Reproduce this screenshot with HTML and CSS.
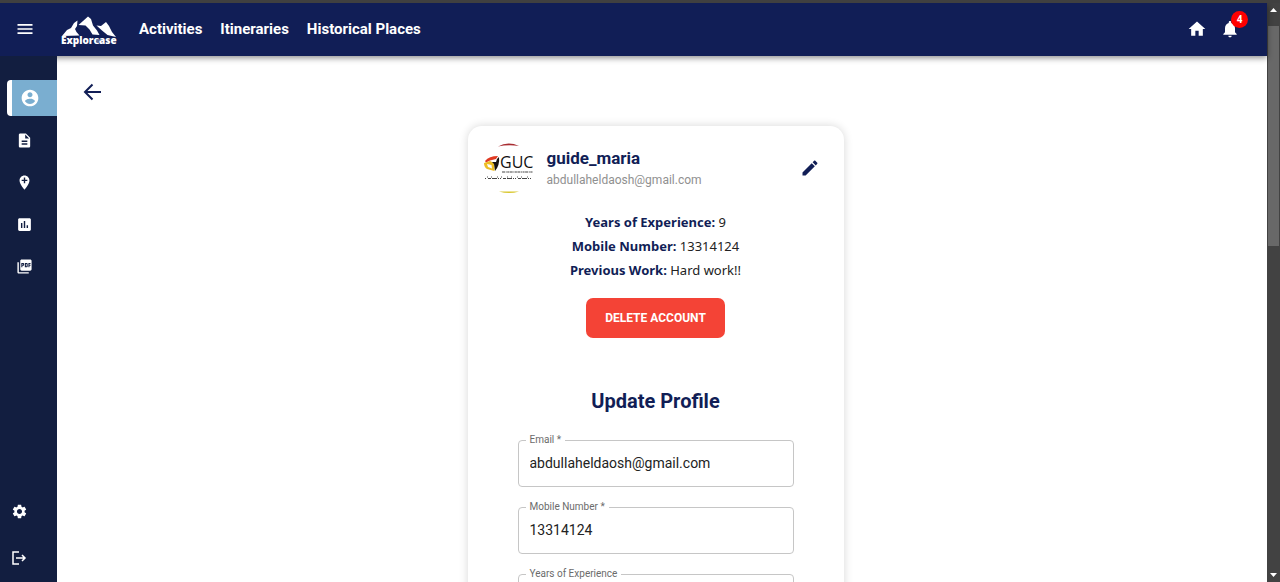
FILE: index.html
```html
<!DOCTYPE html>
<html lang="en">
<head>
<meta charset="utf-8">
<title>Explorease - Profile</title>
<link rel="stylesheet" href="styles.css">
</head>
<body>
<div class="app">
  <header class="topbar">
    <button class="icon-btn menu-btn" aria-label="Menu"><svg viewBox="0 0 24 24" width="20" height="20"><path d="M3 18h18v-2H3v2zm0-5h18v-2H3v2zm0-7v2h18V6H3z"/></svg></button>
    <a class="logo" href="#" aria-label="Explorease home">
      <svg viewBox="0 0 58 34" width="58" height="34">
        <path d="M2 22 7 16l4-2 3-5 3.500-2.500L17 12l-2 3 1.500 3 3 3.500z"/>
        <path d="M18.500 11 23 7l5-4.500L31 5l2 6.500 4 5 2.500 4.500-7-.5-3-5-4-4z"/>
        <path d="M36.500 11.500l4.500.5 5-4 3 4 3 6 4 5-8.500-2-5.500-4.500z"/>
        <text class="logo-text" x="1" y="30">Explore</text>
        <circle class="logo-dot" cx="38" cy="27" r="2"/>
        <text class="logo-text" x="39" y="30">ase</text>
      </svg>
    </a>
    <nav class="links">
      <a href="#">Activities</a>
      <a href="#">Itineraries</a>
      <a href="#">Historical Places</a>
    </nav>
    <div class="actions">
      <button class="icon-btn" aria-label="Home"><svg viewBox="0 0 24 24" width="20" height="20"><path d="M10 20v-6h4v6h5v-8h3L12 3 2 12h3v8z"/></svg></button>
      <button class="icon-btn" aria-label="Notifications"><svg viewBox="0 0 24 24" width="20" height="20"><path d="M12 22c1.100 0 2-.9 2-2h-4c0 1.100.890 2 2 2zm6-6v-5c0-3.070-1.640-5.640-4.500-6.320V4c0-.83-.67-1.500-1.500-1.500s-1.500.67-1.500 1.500v.68C7.630 5.360 6 7.920 6 11v5l-2 2v1h16v-1l-2-2z"/></svg><span class="badge">4</span></button>
    </div>
  </header>
  <div class="body">
    <aside class="sidebar">
      <nav class="side-nav" aria-label="Sections">
        <a class="side-link active" href="#" aria-label="Profile"><svg viewBox="0 0 24 24" width="20" height="20"><path d="M12 2C6.480 2 2 6.480 2 12s4.480 10 10 10 10-4.480 10-10S17.520 2 12 2zm0 3c1.660 0 3 1.340 3 3s-1.340 3-3 3-3-1.340-3-3 1.340-3 3-3zm0 14.200c-2.500 0-4.710-1.280-6-3.220.03-1.990 4-3.080 6-3.080 1.990 0 5.970 1.090 6 3.080-1.290 1.940-3.500 3.220-6 3.220z"/></svg></a>
        <a class="side-link" href="#" aria-label="Itineraries"><svg viewBox="0 0 24 24" width="17" height="17"><path d="M14 2H6c-1.100 0-1.990.9-1.990 2L4 20c0 1.100.890 2 1.990 2H18c1.100 0 2-.9 2-2V8l-6-6zm2 16H8v-2h8v2zm0-4H8v-2h8v2zm-3-5V3.500L18.500 9H13z"/></svg></a>
        <a class="side-link" href="#" aria-label="Add place"><svg viewBox="0 0 24 24" width="17" height="17"><path d="M12 2C8.140 2 5 5.140 5 9c0 5.250 7 13 7 13s7-7.750 7-13c0-3.860-3.140-7-7-7zm4 8h-3v3h-2v-3H8V8h3V5h2v3h3v2z"/></svg></a>
        <a class="side-link" href="#" aria-label="Statistics"><svg viewBox="0 0 24 24" width="17" height="17"><path d="M19 3H5c-1.100 0-2 .9-2 2v14c0 1.100.9 2 2 2h14c1.100 0 2-.9 2-2V5c0-1.100-.9-2-2-2zM9 17H7v-7h2v7zm4 0h-2V7h2v10zm4 0h-2v-4h2v4z"/></svg></a>
        <a class="side-link" href="#" aria-label="PDF reports"><svg viewBox="0 0 24 24" width="17" height="17"><path d="M20 2H8c-1.100 0-2 .9-2 2v12c0 1.100.9 2 2 2h12c1.100 0 2-.9 2-2V4c0-1.100-.9-2-2-2zm-8.500 7.500c0 .83-.67 1.500-1.500 1.500H9v2H7.500V7H10c.83 0 1.500.67 1.500 1.500v1zm5 2c0 .83-.67 1.500-1.500 1.500h-2.500V7H15c.83 0 1.500.67 1.500 1.500v3zm4-3H19v1h1.500V11H19v2h-1.500V7h3v1.500zM9 9.500h1v-1H9v1zM4 6H2v14c0 1.100.9 2 2 2h14v-2H4V6zm10 5.500h1v-3h-1v3z"/></svg></a>
      </nav>
      <div class="side-foot">
        <a class="foot-link" href="#" aria-label="Settings"><svg viewBox="0 0 24 24" width="17" height="17"><path d="M19.140 12.940c.04-.3.060-.61.060-.94 0-.32-.02-.64-.07-.94l2.030-1.580c.18-.14.230-.41.120-.61l-1.920-3.320c-.12-.22-.37-.29-.59-.22l-2.390.96c-.5-.38-1.030-.7-1.620-.94l-.36-2.540c-.04-.24-.24-.41-.48-.41h-3.840c-.24 0-.43.170-.47.410l-.36 2.540c-.59.240-1.130.570-1.620.940l-2.390-.96c-.22-.08-.47 0-.59.220L2.740 8.870c-.12.210-.08.470.12.610l2.030 1.580c-.05.300-.09.630-.09.940s.02.640.070.940l-2.030 1.580c-.18.140-.23.410-.12.610l1.920 3.320c.12.220.37.290.59.220l2.390-.96c.5.380 1.030.7 1.620.94l.36 2.540c.05.240.24.410.48.410h3.840c.24 0 .44-.17.470-.41l.36-2.540c.59-.24 1.130-.56 1.620-.94l2.390.96c.22.080.47 0 .59-.22l1.920-3.320c.12-.22.070-.47-.12-.61l-2.010-1.580zM12 15.600c-1.980 0-3.600-1.620-3.600-3.600s1.620-3.600 3.600-3.600 3.600 1.620 3.600 3.600-1.620 3.600-3.600 3.600z"/></svg></a>
        <a class="foot-link" href="#" aria-label="Log out"><svg class="stroke" viewBox="0 0 16 16" width="16" height="16"><path d="M8 2H2v12h6M5 8h9M11 5l3 3-3 3"/></svg></a>
      </div>
    </aside>
    <main class="content">
      <button class="icon-btn back" aria-label="Back"><svg class="stroke" viewBox="0 0 20 20" width="20" height="20"><path d="M19 10H3M10.500 2.500 3 10l7.500 7.500"/></svg></button>
      <section class="card">
        <div class="profile">
          <svg class="avatar" viewBox="0 0 50 50" width="50" height="50" role="img" aria-label="GUC logo">
            <path fill="#a82d32" d="M14 3.500Q24-2 35 3 24 1.500 14 3.500z"/>
            <path fill="#d9c72e" d="M15 48.500h20Q25 51.500 15 48.500z"/>
            <path fill="#e03a22" d="M1 18Q5 13 14 13l-2 3-6 1.500-4 2z"/>
            <path fill="#edbd23" d="M0 20l6-2 4 2 .5 8L3 26Q0 24 0 20zM3 21l1 3 4 1.500L7.500 22z"/>
            <path fill="#171310" d="M13 16l2-2q1 8-4 14l-1-7-2-2 4 0z"/>
            <text class="guc" x="16" y="25">GUC</text>
            <path fill="none" stroke="#444" stroke-width="1.200" stroke-dasharray="3 .7 1 .5 2 .5" d="M18 29h31"/>
            <path fill="none" stroke="#444" stroke-width="1.200" stroke-dasharray="1 2 3 1 5 1 1 1" d="M1 35.500h48"/>
            <path fill="none" stroke="#555" stroke-width="1" stroke-dasharray="1 3 1 5" d="M3 34h44"/>
          </svg>
          <div class="who">
            <h1>guide_maria</h1>
            <p>abdullaheldaosh@gmail.com</p>
          </div>
          <button class="icon-btn edit" aria-label="Edit profile"><svg viewBox="0 0 24 24" width="20" height="20"><path d="M3 17.250V21h3.750L17.810 9.940l-3.750-3.750L3 17.250zM20.710 7.040c.39-.39.390-1.020 0-1.410l-2.340-2.340c-.39-.39-1.020-.39-1.410 0l-1.830 1.830 3.750 3.750 1.830-1.830z"/></svg></button>
        </div>
        <div class="details">
          <p><strong>Years of Experience:</strong> 9</p>
          <p><strong>Mobile Number:</strong> 13314124</p>
          <p><strong>Previous Work:</strong> Hard work!!</p>
        </div>
        <button class="delete">DELETE ACCOUNT</button>
        <form class="form">
          <h2>Update Profile</h2>
          <fieldset class="field">
            <legend><label for="email">Email *</label></legend>
            <input id="email" type="text" value="abdullaheldaosh@gmail.com">
          </fieldset>
          <fieldset class="field">
            <legend><label for="mobile">Mobile Number *</label></legend>
            <input id="mobile" type="text" value="13314124">
          </fieldset>
          <fieldset class="field">
            <legend><label for="years">Years of Experience</label></legend>
            <input id="years" type="text" value="9">
          </fieldset>
        </form>
      </section>
    </main>
  </div>
</div>
<div class="scrollbar" aria-hidden="true">
  <svg viewBox="0 0 13 23" width="13" height="23"><path d="M3 9 6.500 5 10 9z"/></svg>
  <div class="thumb"></div>
  <svg class="down" viewBox="0 0 13 14" width="13" height="14"><path d="M3 5h7L6.500 9z"/></svg>
</div>
</body>
</html>
```
FILE: styles.css
```css
* { box-sizing: border-box; }
body {
  margin: 0;
  height: 100vh;
  display: flex;
  overflow: hidden;
  border-top: 3px solid #404040;
  background: #fff;
  font-family: Roboto, "Liberation Sans", sans-serif;
  color: #222;
}
h1, h2, p { margin: 0; }
svg { display: block; fill: currentColor; flex: none; }
.stroke { fill: none; stroke: currentColor; stroke-width: 2; }
.side-foot .stroke { stroke-width: 1.5; }
.icon-btn {
  position: relative;
  padding: 0;
  border: 0;
  background: none;
  color: inherit;
}
.app { flex: 1; min-width: 0; display: flex; flex-direction: column; }
.topbar {
  position: relative;
  flex: none;
  height: 53px;
  padding: 0 27px 1px 15px;
  display: flex;
  align-items: center;
  background: #111e56;
  color: #fff;
  box-shadow: 0 2px 6px rgba(0, 0, 0, .45);
}
.logo { margin-left: 25px; padding-top: 4px; color: #fff; }
.logo-text { font: 800 10px "Open Sans", sans-serif; }
.logo-dot { fill: #65709d; }
.links { display: flex; gap: 18px; margin-left: 21px; }
.links a { color: #fff; font-size: 15px; font-weight: 700; line-height: 20px; text-decoration: none; }
.actions { margin-left: auto; display: flex; gap: 13px; }
.badge {
  position: absolute;
  top: -8px;
  right: -8px;
  width: 17px;
  height: 17px;
  border-radius: 50%;
  background: #f00;
  font: 700 10px/17px Roboto, sans-serif;
  text-align: center;
}
.body { flex: 1; min-height: 0; display: flex; }
.sidebar {
  position: relative;
  flex: none;
  width: 57px;
  padding: 24px 0 16px;
  display: flex;
  flex-direction: column;
  justify-content: space-between;
  background: #121e40;
  color: #fff;
}
.side-nav { display: flex; flex-direction: column; gap: 6px; }
.side-link { height: 36px; padding-left: 16px; display: flex; align-items: center; color: #fff; }
.side-link.active {
  margin-left: 7px;
  padding-left: 8px;
  border-left: 5px solid #fff;
  border-radius: 4px 0 0 4px;
  background: #7aaed0;
}
.side-foot { display: flex; flex-direction: column; gap: 30px; padding-left: 11px; }
.foot-link { color: #fff; }
.content {
  flex: 1;
  min-width: 0;
  padding: 26px 38px 0 25px;
  display: flex;
  flex-direction: column;
  align-items: flex-start;
  color: #111e56;
}
.card {
  align-self: center;
  flex: none;
  width: 376px;
  margin-top: 24px;
  padding: 17px 16px 24px;
  display: flex;
  flex-direction: column;
  align-items: center;
  border-radius: 14px;
  background: #fff;
  box-shadow: 0 0 10px rgba(0, 0, 0, .16);
}
.profile { align-self: stretch; display: flex; align-items: center; gap: 13px; }
.guc { font: 16px "Open Sans", sans-serif; fill: #111; }
.who { padding-top: 2px; }
h1 { font-size: 17px; line-height: 22px; font-weight: 700; }
.who p { font-size: 12px; line-height: 22px; color: #909090; }
.edit { margin-left: auto; margin-right: 8px; }
.details {
  margin-top: 17px;
  font: 13px/24px "Noto Sans", "Open Sans", sans-serif;
  text-align: center;
  color: #222;
}
.details strong { color: #111e56; }
.delete {
  height: 40px;
  margin-top: 16px;
  padding: 0 19px;
  border: 0;
  border-radius: 7px;
  background: #f44336;
  color: #fff;
  font: 700 12px Roboto, sans-serif;
}
.form { align-self: stretch; padding: 0 34px; margin-top: 48px; }
h2 { font-size: 20px; line-height: 30px; font-weight: 700; text-align: center; margin-bottom: 18px; }
.field {
  min-width: 0;
  height: 53px;
  margin: 0 0 14px;
  padding: 5px 7px 0;
  border: 1px solid #c6c6c6;
  border-radius: 4px;
}
.field legend { padding: 0 4px; font-size: 10px; line-height: 12px; color: #6b6b6b; }
.field label { display: block; }
.field input {
  display: block;
  width: 100%;
  height: 24px;
  padding: 0 4px;
  border: 0;
  outline: 0;
  background: none;
  font: 14px Roboto, sans-serif;
  color: #222;
}
.scrollbar {
  flex: none;
  width: 13px;
  display: flex;
  flex-direction: column;
  background: #424242;
  color: #fff;
}
.thumb { flex: 0 0 38%; margin: 0 1px; background: #686868; }
.down { margin-top: auto; }
```
